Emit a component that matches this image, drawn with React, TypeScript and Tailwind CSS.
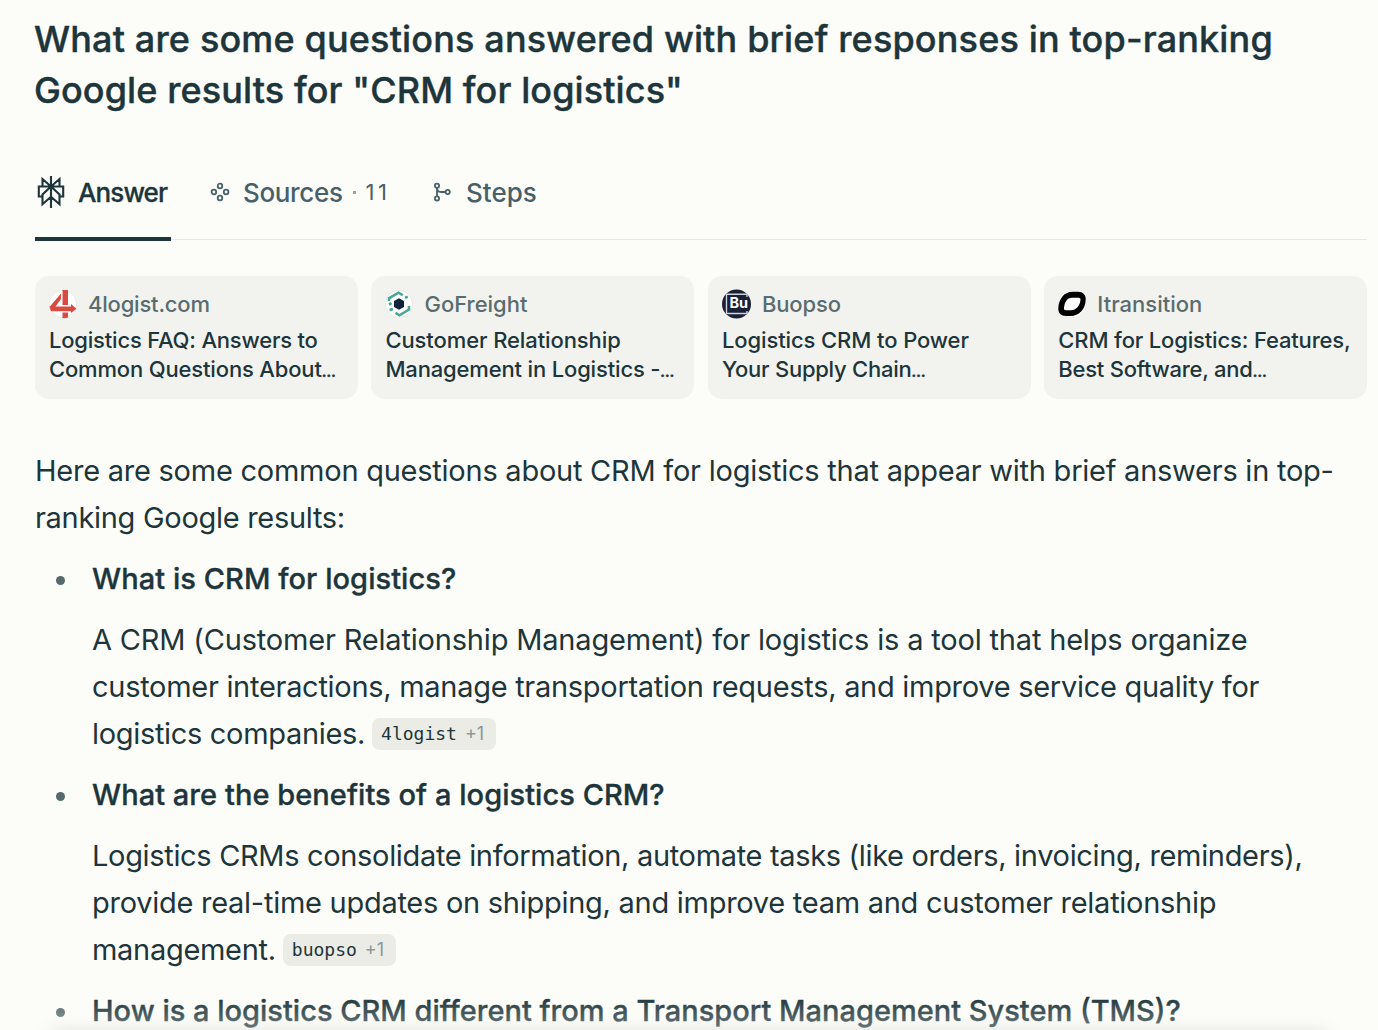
import type { ReactNode } from "react";
import { clsx } from "clsx";

type Line = { text: string; spacing: string };

const title: Line[] = [
  { text: "What are some questions answered with brief responses in top-ranking", spacing: "tracking-[0.16px]" },
  { text: 'Google results for "CRM for logistics"', spacing: "tracking-[0.1px]" },
];

const intro: Line[] = [
  { text: "Here are some common questions about CRM for logistics that appear with brief answers in top-", spacing: "tracking-[-0.245px]" },
  { text: "ranking Google results:", spacing: "tracking-[-0.3px]" },
];

const answers: { question: Line; lines: Line[]; source?: string }[] = [
  {
    question: { text: "What is CRM for logistics?", spacing: "tracking-[0.06px]" },
    lines: [
      { text: "A CRM (Customer Relationship Management) for logistics is a tool that helps organize", spacing: "tracking-[-0.18px]" },
      { text: "customer interactions, manage transportation requests, and improve service quality for", spacing: "tracking-[-0.29px]" },
      { text: "logistics companies.", spacing: "tracking-[-0.32px]" },
    ],
    source: "4logist",
  },
  {
    question: { text: "What are the benefits of a logistics CRM?", spacing: "tracking-[0.05px]" },
    lines: [
      { text: "Logistics CRMs consolidate information, automate tasks (like orders, invoicing, reminders),", spacing: "tracking-[-0.33px]" },
      { text: "provide real-time updates on shipping, and improve team and customer relationship", spacing: "tracking-[-0.27px]" },
      { text: "management.", spacing: "tracking-[-0.3px]" },
    ],
    source: "buopso",
  },
  {
    question: { text: "How is a logistics CRM different from a Transport Management System (TMS)?", spacing: "tracking-normal" },
    lines: [],
  },
];

const sources: { name: Line; icon: ReactNode; lines: Line[] }[] = [
  {
    name: { text: "4logist.com", spacing: "tracking-[-0.2px]" },
    icon: <FourLogistIcon />,
    lines: [
      { text: "Logistics FAQ: Answers to", spacing: "tracking-[-0.2px]" },
      { text: "Common Questions About…", spacing: "tracking-[-0.16px]" },
    ],
  },
  {
    name: { text: "GoFreight", spacing: "tracking-normal" },
    icon: <GoFreightIcon />,
    lines: [
      { text: "Customer Relationship", spacing: "tracking-[-0.1px]" },
      { text: "Management in Logistics -…", spacing: "tracking-[-0.16px]" },
    ],
  },
  {
    name: { text: "Buopso", spacing: "tracking-[-0.1px]" },
    icon: <BuopsoIcon />,
    lines: [
      { text: "Logistics CRM to Power", spacing: "tracking-[-0.1px]" },
      { text: "Your Supply Chain…", spacing: "tracking-[-0.25px]" },
    ],
  },
  {
    name: { text: "Itransition", spacing: "tracking-normal" },
    icon: <ItransitionIcon />,
    lines: [
      { text: "CRM for Logistics: Features,", spacing: "tracking-[-0.16px]" },
      { text: "Best Software, and…", spacing: "tracking-[-0.25px]" },
    ],
  },
];

function FourLogistIcon() {
  return (
    <svg width="28" height="30" viewBox="0 0 28 30">
      <circle cx="14" cy="15" r="13.7" fill="#fff" stroke="#e0e1dd" strokeWidth="0.7" />
      <path d="M13.5 1H19v15h-5.5zM.5 18 12 4.500v5.500L6.500 17.500H22V15l5.500 4.800L22 24v-1.700H2z" fill="#d84b41" />
      <path d="M13.500 23.500H19v5q-2.700.9-5.500.6z" fill="#d84b41" />
    </svg>
  );
}

function GoFreightIcon() {
  return (
    <svg width="28" height="30" viewBox="0 0 28 30">
      <circle cx="14" cy="15" r="13.6" fill="#fff" stroke="#e3e5e1" strokeWidth="0.8" />
      <path d="m14 9.200 5 2.900v5.800l-5 2.900-5-2.900v-5.800z" fill="#10243f" />
      <path d="M4 12V9.300l9.500-5.600 4.200 2.400M24 17v3.500l-9.500 5.800-4-2.400M20 8.800l2.800-1M4 15.500l2.600-1.400M4.500 21l3.500-1" fill="none" stroke="#4aa796" strokeWidth="2.6" />
    </svg>
  );
}

function BuopsoIcon() {
  return (
    <svg width="29" height="30" viewBox="0 0 29 30">
      <circle cx="14.5" cy="15" r="14.5" fill="#1a2137" />
      <path d="M25 8V5.200H4.500v19.300H25V22" fill="none" stroke="#cfd2dc" strokeWidth="1.4" />
      <text x="7.5" y="19" fill="#fff" fontFamily="Inter" fontWeight="700" fontSize="14.5">Bu</text>
    </svg>
  );
}

function ItransitionIcon() {
  return (
    <svg width="28" height="30" viewBox="0 0 28 30">
      <circle cx="14" cy="15" r="13.8" fill="#fff" stroke="#e3e5e1" strokeWidth="0.6" />
      <path d="M14.500 2.800H20c5 0 8 3 7.700 8C27.300 20.500 21 27 12.500 27H8C3 27 0 24 .3 19 .9 9.500 6.500 2.800 14.500 2.800z" fill="#000" />
      <path d="M14 8.800h6.500c1.500 0 2.200.8 2 2C22 17 18 21.200 13 21.200H8c-1.500 0-2.200-.8-2-2C6.500 13 9 8.800 14 8.800z" fill="#fff" />
    </svg>
  );
}

function AnswerIcon() {
  return (
    <svg width="28" height="34" viewBox="0 0 28 34" fill="none" stroke="#1d353b" strokeWidth="2.1">
      <path d="M14 1v32M14 11.500 5.500 4v7.500M14 11.500 22.500 4v7.500M5.500 21.500H1.800v-10h24.400v10h-3.700M14 11.500l-8.500 8v9.700L14 21.800M14 11.500l8.500 8v9.700L14 21.800" />
    </svg>
  );
}

function SourcesIcon() {
  return (
    <svg width="20" height="20" viewBox="0 0 20 20" fill="none" stroke="#47606a" strokeWidth="1.8">
      <circle cx="10" cy="4" r="2.3" />
      <circle cx="3.9" cy="10" r="2.3" />
      <circle cx="16.1" cy="10" r="2.3" />
      <circle cx="10" cy="16" r="2.3" />
    </svg>
  );
}

function StepsIcon() {
  return (
    <svg width="20" height="20" viewBox="0 0 20 20" fill="none" stroke="#47606a" strokeWidth="1.8">
      <circle cx="5" cy="3.7" r="2.1" />
      <circle cx="5" cy="16.4" r="2.1" />
      <circle cx="15.7" cy="10" r="2.1" />
      <path d="M5 6v8.300M5 6c0 3 1.500 4 4 4h4.500" />
    </svg>
  );
}

function Row({ line }: { line: Line }) {
  const clipped = line.text.endsWith("…");
  return (
    <span className={clsx("block whitespace-nowrap", line.spacing)}>
      {clipped ? line.text.slice(0, -1) : line.text}
      {clipped && <span className="text-[14px] font-bold leading-none [-webkit-text-stroke:0.5px]">…</span>}
    </span>
  );
}

function Citation({ source }: { source: string }) {
  return (
    <span className="flex h-8 items-center gap-2 rounded-lg bg-[#ebece6] pl-[9px] pr-[12px] font-['DejaVu_Sans_Mono'] text-[18px]">
      <span>{source}</span>
      <span className="font-[Inter] text-[#8b9897]">+1</span>
    </span>
  );
}

export default function App() {
  return (
    <main className="relative h-[1030px] w-full overflow-hidden bg-[#fcfdf8] pl-[35px] pr-[11px] pt-[14px] font-['Inter',sans-serif] text-[#1d353b]">
      <h1 className="-ml-px text-[36px] font-medium leading-[51px] [-webkit-text-stroke:0.4px]">
        {title.map((line) => <Row key={line.text} line={line} />)}
      </h1>

      {/* Tabs */}
      <nav className="mt-[37px] flex h-[87px] border-b border-[#e6e8e3] text-[26px] font-medium text-[#47606a]">
        <div className="flex h-[88px] w-[136px] shrink-0 items-center gap-[13px] border-b-4 border-[#1d353b] pb-[6px] pl-[2px] text-[#1d353b]">
          <AnswerIcon />
          <span className="tracking-[-0.9px] [-webkit-text-stroke:0.3px]">Answer</span>
        </div>
        <div className="ml-[39px] flex h-[78px] w-[181px] shrink-0 items-center">
          <SourcesIcon />
          <span className="ml-[13px] tracking-[-0.35px]">Sources</span>
          <span className="ml-[10px] size-[3px] bg-[#9aa5a4]" />
          <span className="ml-[10px] text-[22px] font-normal tracking-[3.5px]">11</span>
        </div>
        <div className="ml-[41px] flex h-[78px] items-center gap-[14px]">
          <StepsIcon />
          <span>Steps</span>
        </div>
      </nav>

      {/* Source cards */}
      <section className="mt-[36px] grid grid-cols-4 gap-[13.8px]">
        {sources.map(({ name, icon, lines }) => (
          <div key={name.text} className="h-[123px] rounded-[14px] bg-[#f2f3ee] px-[14px] pt-[13px] text-[22px] font-medium leading-[29px]">
            <div className="mb-[7px] flex h-[30px] items-center gap-[11px] text-[#5a6c70]">
              {icon}
              <Row line={name} />
            </div>
            {lines.map((line) => <Row key={line.text} line={line} />)}
          </div>
        ))}
      </section>

      {/* Answer body */}
      <section className="mt-[48px] text-[29px] leading-[47px]">
        <p>{intro.map((line) => <Row key={line.text} line={line} />)}</p>
        <ul>
          {answers.map(({ question, lines, source }) => (
            <li key={question.text} className="mt-[14px] pl-[57px]">
              <div className="-ml-[36px] flex items-center gap-[27px] font-medium [-webkit-text-stroke:0.35px]">
                <span className="mt-[3px] size-[9px] shrink-0 rounded-full bg-[#566a6e]" />
                <Row line={question} />
              </div>
              <div className="mt-[14px]">
                {lines.map((line, i) => (
                  <div key={line.text} className="flex items-center gap-[7px]">
                    <Row line={line} />
                    {i === lines.length - 1 && source && <Citation source={source} />}
                  </div>
                ))}
              </div>
            </li>
          ))}
        </ul>
      </section>

      <div className="absolute inset-x-0 bottom-0 h-[34px] bg-linear-to-b from-[#fcfdf8]/0 to-[#fcfdf8]/35" />
      <div className="absolute inset-x-[50px] -bottom-[16px] h-3 rounded-xl shadow-[0_0_20px_rgba(0,0,0,0.16)]" />
    </main>
  );
}
